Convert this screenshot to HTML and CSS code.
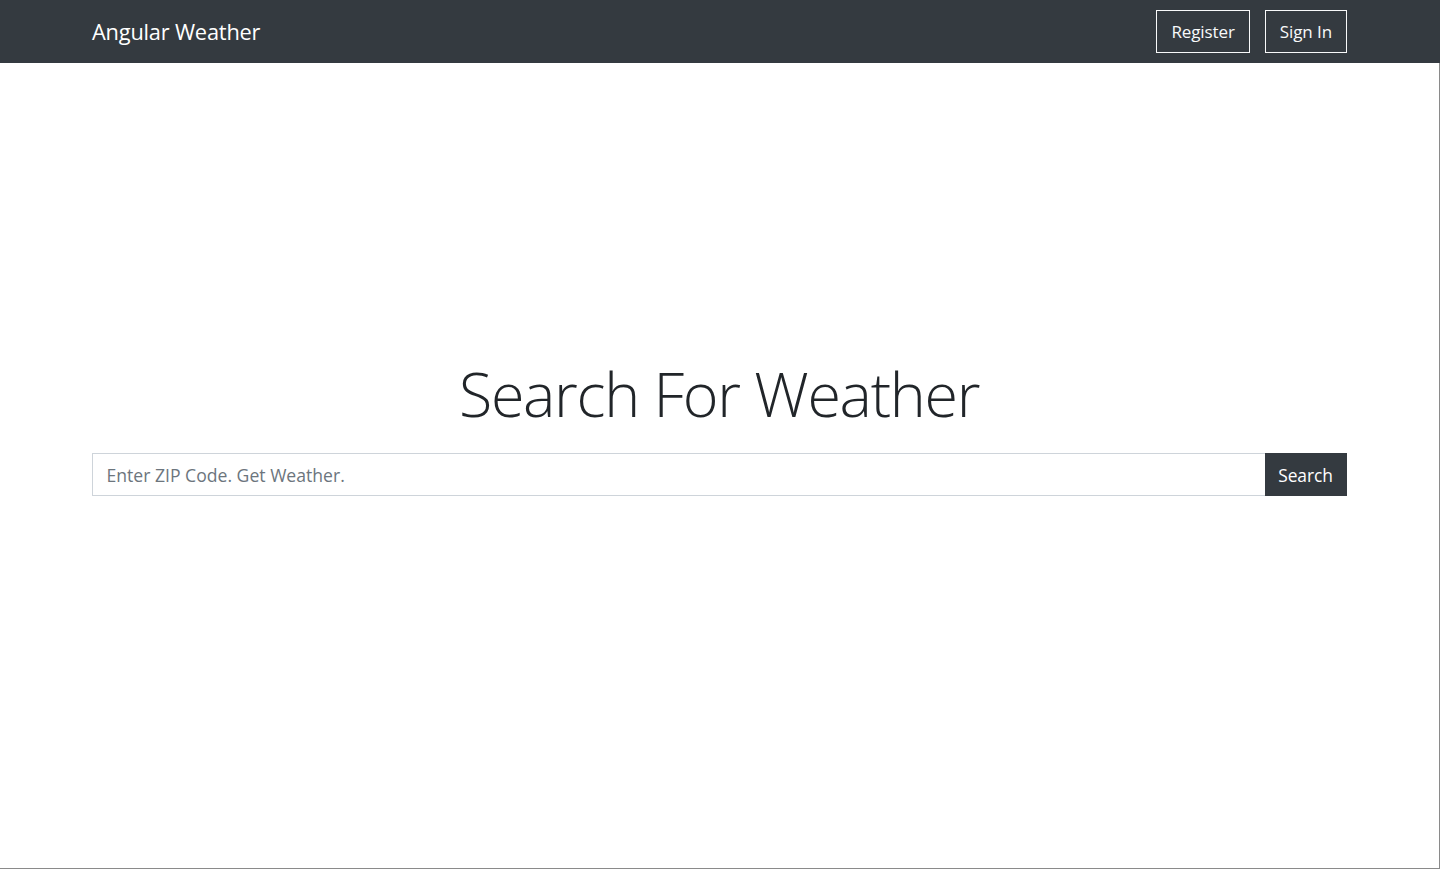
FILE: index.html
```html
<!DOCTYPE html>
<html lang="en">
<head>
<meta charset="utf-8">
<title>Angular Weather</title>
<link rel="stylesheet" href="styles.css">
</head>
<body>
<nav class="navbar">
  <div class="container nav-inner">
    <a class="brand" href="#">Angular Weather</a>
    <div class="nav-actions">
      <button class="btn-outline">Register</button>
      <button class="btn-outline">Sign In</button>
    </div>
  </div>
</nav>
<main class="main">
  <div class="container search-wrap">
    <h1 class="title">Search For Weather</h1>
    <form class="input-group">
      <input class="zip-input" type="text" placeholder="Enter ZIP Code. Get Weather.">
      <button class="btn-search" type="button">Search</button>
    </form>
  </div>
</main>
</body>
</html>
```
FILE: styles.css
```css
* { box-sizing: border-box; }
html, body { margin: 0; padding: 0; height: 100%; }
body {
  font-family: "Open Sans", "Noto Sans", Arial, sans-serif;
  color: #212529;
  background: #fff;
  display: flex;
  flex-direction: column;
  overflow: hidden;
}
.container {
  width: 1256px;
  margin: 0 auto;
}
.navbar {
  background: #343a40;
  height: 63px;
  flex: 0 0 63px;
  display: flex;
  align-items: center;
}
.nav-inner {
  display: flex;
  align-items: center;
  justify-content: space-between;
  padding-right: 1px;
}
.brand {
  color: #fff;
  text-decoration: none;
  font-size: 21.8px;
  letter-spacing: -0.2px;
  line-height: 1;
  margin-top: 1px;
}
.nav-actions {
  display: flex;
  gap: 15px;
  margin-top: -1px;
}
.btn-outline {
  font-family: inherit;
  background: transparent;
  color: #f8f9fa;
  border: 1px solid #f8f9fa;
  border-radius: 0;
  height: 43px;
  padding: 0 14px;
  font-size: 17px;
  letter-spacing: -0.1px;
}
.main {
  flex: 1;
  border-right: 1px solid #8a8a8a;
  border-bottom: 1px solid #8a8a8a;
  padding-top: 294px;
}
.search-wrap {
  display: flex;
  flex-direction: column;
  align-items: stretch;
  padding-right: 1px;
}
.title {
  margin: 0 0 22px;
  text-align: center;
  font-weight: 300;
  font-size: 61px;
  line-height: 74px;
  letter-spacing: -1.3px;
  color: #212529;
}
.input-group {
  display: flex;
  margin: 0;
  height: 43px;
}
.zip-input {
  flex: 1;
  font-family: inherit;
  font-size: 17.6px;
  border: 1px solid #ced4da;
  border-right: none;
  border-radius: 0;
  padding: 0 14px;
  color: #495057;
  outline: none;
  letter-spacing: 0;
}
.zip-input::placeholder { color: #6c757d; }
.btn-search {
  font-family: inherit;
  background: #343a40;
  color: #fff;
  border: 1px solid #343a40;
  border-radius: 0;
  width: 82px;
  font-size: 17.4px;
  letter-spacing: -0.1px;
  padding: 0;
}
```
